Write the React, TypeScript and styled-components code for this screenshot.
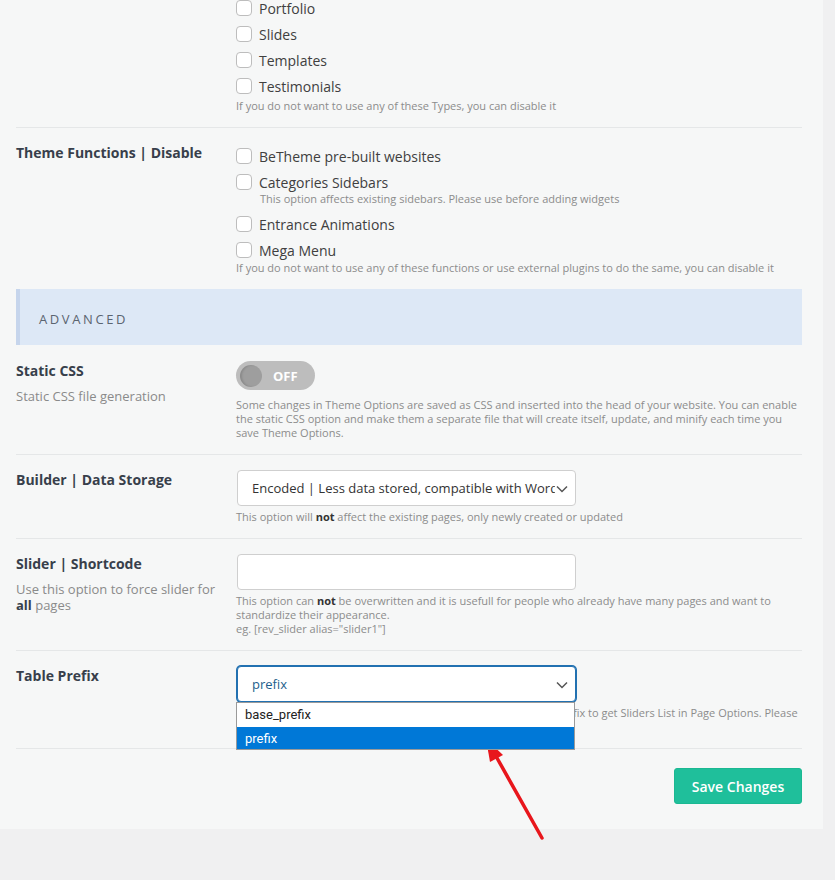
import * as React from 'react';
import styled, { createGlobalStyle } from 'styled-components';

const GlobalStyle = createGlobalStyle`
  html, body {
    margin: 0;
    padding: 0;
    background: #f0f0f1;
    font-family: "Open Sans", "Noto Sans", sans-serif;
  }
`;

const Page = styled.div`
  position: relative;
  width: 835px;
  height: 880px;
  overflow: hidden;
  background: #f0f0f1;
`;

// the options page is scrolled a little, so the first group starts above the fold
const Panel = styled.div`
  width: 823px;
  box-sizing: border-box;
  margin-top: -20px;
  padding: 0 21px 25px 16px;
  background: #f6f7f7;
`;

const Row = styled.div<{ $last?: boolean; $top?: number }>`
  display: grid;
  grid-template-columns: 220px 566px;
  padding: ${(p) => p.$top ?? 15}px 0 14px;
  border-bottom: ${(p) => (p.$last ? 'none' : '1px solid #e5e7e8')};
`;

const LabelCol = styled.div`
  display: flex;
  flex-direction: column;
`;

const Label = styled.div`
  font-size: 14px;
  line-height: 20px;
  font-weight: 700;
  color: #383f4b;
`;

const SubLabel = styled.div`
  margin-top: 7px;
  font-size: 13px;
  line-height: 16px;
  color: #8a8a8a;

  b {
    color: #383f4b;
  }
`;

const Field = styled.div`
  position: relative;
  display: flex;
  flex-direction: column;
  align-items: flex-start;
`;

const CheckRow = styled.label`
  display: flex;
  align-items: center;
  gap: 7px;
  height: 26px;
  font-size: 14px;
  color: #404040;
`;

const Box = styled.span`
  width: 16px;
  height: 16px;
  box-sizing: border-box;
  border: 1px solid #bdbdbd;
  border-radius: 4px;
  background: #fff;
`;

const Spacer = styled.div<{ $h: number }>`
  height: ${(p) => p.$h}px;
`;

const Desc = styled.div<{ $gap?: number; $indent?: boolean; $nowrap?: boolean }>`
  margin-top: ${(p) => p.$gap ?? 0}px;
  padding-left: ${(p) => (p.$indent ? '24px' : '0')};
  font-size: 11px;
  line-height: 14px;
  color: #8c8c8c;
  white-space: ${(p) => (p.$nowrap ? 'nowrap' : 'normal')};

  b {
    color: #333;
  }
`;

const Heading = styled.div`
  height: 56px;
  box-sizing: border-box;
  display: flex;
  align-items: center;
  padding: 3px 0 0 19px;
  border-left: 4px solid #c6d5ec;
  background: #dde8f6;
  font-size: 13px;
  letter-spacing: 2.6px;
  color: #5b6470;
`;

const Toggle = styled.div`
  width: 79px;
  height: 29px;
  box-sizing: border-box;
  display: flex;
  align-items: center;
  padding: 0 4px;
  gap: 11px;
  border-radius: 15px;
  background: #bdbdbd;
  color: #fff;
  font-size: 13px;
  font-weight: 700;
`;

const Knob = styled.span`
  width: 22px;
  height: 22px;
  border-radius: 50%;
  background: #9e9e9e;
  box-shadow: inset 2px 0 2px rgba(0, 0, 0, 0.12);
`;

const SelectBox = styled.div<{ $focus?: boolean }>`
  position: relative;
  width: 339px;
  height: 36px;
  box-sizing: border-box;
  margin-left: 1px;
  display: flex;
  align-items: center;
  padding: 0 20px 0 14px;
  background: #fff;
  border: 1px solid ${(p) => (p.$focus ? '#2271b1' : '#cfcfcf')};
  box-shadow: ${(p) => (p.$focus ? '0 0 0 1px #2271b1' : 'none')};
  border-radius: 4px;
  font-size: 13px;
  color: ${(p) => (p.$focus ? '#1d5f8c' : '#333')};
`;

const SelectText = styled.span`
  flex: 1;
  overflow: hidden;
  white-space: nowrap;
`;

const Chevron = styled.svg`
  position: absolute;
  right: 7px;
  top: 14px;
`;

const TextInput = styled.div`
  width: 339px;
  height: 36px;
  box-sizing: border-box;
  margin-left: 1px;
  background: #fff;
  border: 1px solid #cfcfcf;
  border-radius: 4px;
`;

const Dropdown = styled.ul`
  position: absolute;
  top: 36px;
  left: 0;
  width: 339px;
  box-sizing: border-box;
  margin: 0;
  padding: 0;
  list-style: none;
  background: #fff;
  border: 1px solid #9a9a9a;
  font-family: Roboto, "Liberation Sans", sans-serif;
  font-size: 13px;
  z-index: 2;
`;

const Option = styled.li<{ $active?: boolean }>`
  height: 24px;
  line-height: 23px;
  padding-left: 8px;
  color: ${(p) => (p.$active ? '#fff' : '#222')};
  background: ${(p) => (p.$active ? '#0078d7' : '#fff')};

  & + & {
    height: 22px;
  }
`;

const Footer = styled.div`
  display: flex;
  justify-content: flex-end;
  padding-top: 19px;
`;

const SaveButton = styled.button`
  width: 128px;
  height: 36px;
  border: 1px solid #1bb892;
  border-radius: 3px;
  background: #1fbf9b;
  color: #fff;
  font-family: "Open Sans", sans-serif;
  font-size: 14px;
  font-weight: 600;
`;

const Arrow = styled.svg`
  position: absolute;
  left: 0;
  top: 0;
  pointer-events: none;
`;

function renderChecks(items: string[]) {
  return items.map((item) => (
    <CheckRow key={item}>
      <Box />
      {item}
    </CheckRow>
  ));
}

function ChevronIcon() {
  return (
    <Chevron width="12" height="8" viewBox="0 0 12 8">
      <path d="M1 1.5l5 5 5-5" fill="none" stroke="#555" strokeWidth="1.5" />
    </Chevron>
  );
}

export default function App() {
  return (
    <Page>
      <GlobalStyle />
      <Panel>
        <Row>
          <LabelCol />
          <Field>
            {renderChecks(['Portfolio', 'Slides', 'Templates', 'Testimonials'])}
            <Desc>If you do not want to use any of these Types, you can disable it</Desc>
          </Field>
        </Row>

        <Row $last>
          <LabelCol>
            <Label>Theme Functions | Disable</Label>
          </LabelCol>
          <Field>
            {renderChecks(['BeTheme pre-built websites', 'Categories Sidebars'])}
            <Desc $indent $gap={-3}>
              This option affects existing sidebars. Please use before adding widgets
            </Desc>
            <Spacer $h={5} />
            {renderChecks(['Entrance Animations', 'Mega Menu'])}
            <Desc $gap={-2}>
              If you do not want to use any of these functions or use external plugins to do the same, you can disable it
            </Desc>
          </Field>
        </Row>

        <Heading>ADVANCED</Heading>

        <Row $top={16}>
          <LabelCol>
            <Label>Static CSS</Label>
            <SubLabel>Static CSS file generation</SubLabel>
          </LabelCol>
          <Field>
            <Toggle>
              <Knob />
              OFF
            </Toggle>
            <Desc $gap={8}>
              Some changes in Theme Options are saved as CSS and inserted into the head of your website. You can enable
              the static CSS option and make them a separate file that will create itself, update, and minify each time you
              save Theme Options.
            </Desc>
          </Field>
        </Row>

        <Row>
          <LabelCol>
            <Label>Builder | Data Storage</Label>
          </LabelCol>
          <Field>
            <SelectBox>
              <SelectText>Encoded | Less data stored, compatible with WordPress Importer</SelectText>
              <ChevronIcon />
            </SelectBox>
            <Desc $gap={4}>
              This option will <b>not</b> affect the existing pages, only newly created or updated
            </Desc>
          </Field>
        </Row>

        <Row>
          <LabelCol>
            <Label>Slider | Shortcode</Label>
            <SubLabel>
              Use this option to force slider for
              <br />
              <b>all</b> pages
            </SubLabel>
          </LabelCol>
          <Field>
            <TextInput />
            <Desc $gap={4}>
              This option can <b>not</b> be overwritten and it is usefull for people who already have many pages and want to
              <br />
              standardize their appearance.
              <br />
              eg. [rev_slider alias="slider1"]
            </Desc>
          </Field>
        </Row>

        <Row>
          <LabelCol>
            <Label>Table Prefix</Label>
          </LabelCol>
          <Field>
            <SelectBox $focus>
              <SelectText>prefix</SelectText>
              <ChevronIcon />
            </SelectBox>
            <Dropdown>
              <Option>base_prefix</Option>
              <Option $active>prefix</Option>
            </Dropdown>
            <Desc $gap={4} $nowrap>
              Set this option, if you use a multisite installation with different prefix to get Sliders List in Page Options. Please
              <br />
              use base_prefix for the main site and prefix for the other sites.
            </Desc>
          </Field>
        </Row>

        <Footer>
          <SaveButton>Save Changes</SaveButton>
        </Footer>
      </Panel>

      <Arrow width="835" height="880" viewBox="0 0 835 880">
        <line x1="542" y1="838" x2="497" y2="758" stroke="#e8161c" strokeWidth="3.5" strokeLinecap="round" />
        <polygon points="486,739 503,755 490,762" fill="#e8161c" />
      </Arrow>
    </Page>
  );
}
